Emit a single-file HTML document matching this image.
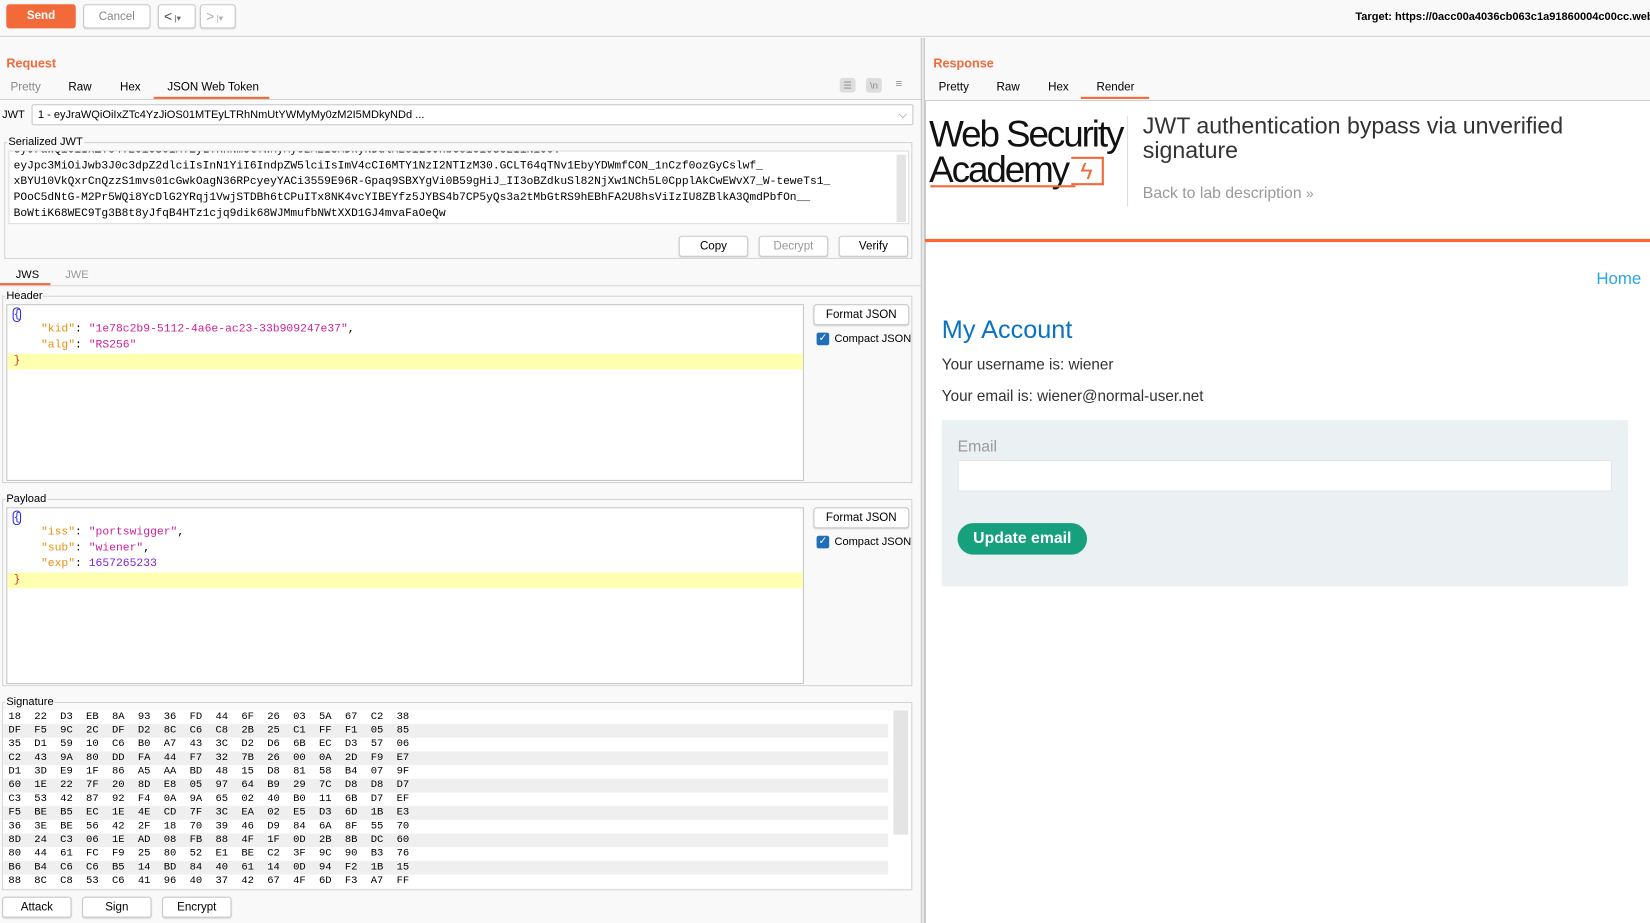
<!DOCTYPE html>
<html><head><meta charset="utf-8">
<style>
*{box-sizing:border-box;margin:0;padding:0}
html,body{width:1650px;height:923px;overflow:hidden;background:#fff}
#w{position:absolute;left:0;top:0;width:1568px;height:877px;transform:scale(1.05230,1.05245);transform-origin:0 0;font-family:"Liberation Sans",sans-serif;font-size:11px;color:#000;background:#f9f9f9}
.a{position:absolute}
.btn{position:absolute;border:1px solid #c8c8c8;border-radius:3px;background:#fff;text-align:center;font-size:11px;line-height:18px;color:#000;box-shadow:0 1px 1px #ddd}
.mono{font-family:"Liberation Mono",monospace}
.grp{position:absolute;border:1px solid #d4d4d4}
.lbl{position:absolute;top:-7px;left:2px;background:#f9f9f9;padding:0 1px;font-size:10.5px;line-height:13px}
.ed{position:absolute;background:#fff;border:1px solid #c6c6c6}
.ln{position:absolute;left:6px;font-size:10.8px;line-height:15px;white-space:pre}
.k{color:#e8900c}.s{color:#d0209a}.n{color:#7a1fe0}
.hl{position:absolute;left:0;right:0;height:15px;background:#ffffb0}
.chk{position:absolute;width:12px;height:12px;background:#1f6fb8;border-radius:2px;color:#fff;font-size:10px;line-height:12px;text-align:center}
.row{position:absolute;left:0;width:841px;height:13px;font-size:10px;line-height:13px}
.row span{display:inline-block;width:24.6px}
.sj div{white-space:pre}
</style></head><body><div id="w">
<div class="a" style="left:0;top:0;width:1568px;height:35px;background:#f9f9f9;border-bottom:1px solid #d0d0d0"></div>
<div class="a" style="left:6px;top:4px;width:66px;height:23px;background:#f26a3a;border-radius:3px;color:#fff;font-weight:bold;text-align:center;line-height:23px;font-size:11px">Send</div>
<div class="btn" style="left:79px;top:4px;width:64px;height:23px;line-height:22px;color:#888">Cancel</div>
<div class="btn" style="left:150px;top:4px;width:36px;height:23px;line-height:21px;font-size:13px;color:#444;text-align:left;padding-left:5px">&lt;<span style="font-size:8px;color:#666"> |▾</span></div>
<div class="btn" style="left:190px;top:4px;width:34px;height:23px;line-height:21px;font-size:13px;color:#aaa;text-align:left;padding-left:5px">&gt;<span style="font-size:8px"> |▾</span></div>
<div class="a" style="left:1288px;top:10px;font-weight:bold;font-size:10.5px;white-space:nowrap">Target: https://0acc00a4036cb063c1a91860004c00cc.web-s</div>
<div class="a" style="left:875px;top:36px;width:4px;height:841px;background:#e6e6e6;border-left:1px solid #c8c8c8;border-right:1px solid #c8c8c8"></div>
<div class="a" style="left:6px;top:53px;color:#f26a3a;font-weight:bold;font-size:12px">Request</div>
<div class="a" style="left:10px;top:77px;color:#888">Pretty</div>
<div class="a" style="left:65px;top:77px">Raw</div>
<div class="a" style="left:114px;top:77px">Hex</div>
<div class="a" style="left:159px;top:77px">JSON Web Token</div>
<div class="a" style="left:0;top:94px;width:875px;height:1px;background:#d0d0d0"></div>
<div class="a" style="left:146px;top:92px;width:110px;height:2px;background:#f26a3a"></div>
<div class="a" style="left:798px;top:74px;width:15px;height:14px;background:#ddd;border-radius:3px;color:#888;font-size:9px;text-align:center;line-height:14px">☰</div>
<div class="a" style="left:823px;top:74px;width:15px;height:14px;background:#ddd;border-radius:3px;color:#888;font-size:9px;text-align:center;line-height:14px">\n</div>
<div class="a" style="left:851px;top:74px;color:#888;font-size:11px">≡</div>
<div class="a" style="left:2px;top:103px;font-size:10.5px">JWT</div>
<div class="a" style="left:30px;top:99px;width:838px;height:20px;background:#fff;border:1px solid #c6c6c6;border-radius:2px;font-size:10.5px;line-height:18px;padding-left:5px">1 - eyJraWQiOiIxZTc4YzJiOS01MTEyLTRhNmUtYWMyMy0zM2I5MDkyNDd ...<span style="position:absolute;right:5px;color:#666">⌵</span></div>
<div class="grp" style="left:4px;top:135px;width:863px;height:111px"><div class="lbl">Serialized JWT</div></div>
<div class="ed mono sj" style="left:8px;top:143px;width:856px;height:70px;overflow:hidden;font-size:10.7px;line-height:15px;padding-left:4px;border-color:#ddd"><div style="margin-top:-8px">eyJraWQiOiIxZTc4YzJiOS01MTEyLTRhNmUtYWMyMy0zM2I5MDkyNDdlMzciLCJhbGciOiJSUzI1NiJ9.</div><div>eyJpc3MiOiJwb3J0c3dpZ2dlciIsInN1YiI6IndpZW5lciIsImV4cCI6MTY1NzI2NTIzM30.GCLT64qTNv1EbyYDWmfCON_1nCzf0ozGyCslwf_</div><div>xBYU10VkQxrCnQzzS1mvs01cGwkOagN36RPcyeyYACi3559E96R-Gpaq9SBXYgVi0B59gHiJ_II3oBZdkuSl82NjXw1NCh5L0CpplAkCwEWvX7_W-teweTs1_</div><div>POoC5dNtG-M2Pr5WQi8YcDlG2YRqj1VwjSTDBh6tCPuITx8NK4vcYIBEYfz5JYBS4b7CP5yQs3a2tMbGtRS9hEBhFA2U8hsViIzIU8ZBlkA3QmdPbfOn__</div><div>BoWtiK68WEC9Tg3B8t8yJfqB4HTz1cjq9dik68WJMmufbNWtXXD1GJ4mvaFaOeQw</div><div style="position:absolute;right:2px;top:3px;width:9px;height:64px;background:#e4e4e4"></div></div>
<div class="btn" style="left:645px;top:224px;width:66px;height:20px">Copy</div>
<div class="btn" style="left:721px;top:224px;width:66px;height:20px;color:#999">Decrypt</div>
<div class="btn" style="left:797px;top:224px;width:66px;height:20px">Verify</div>
<div class="a" style="left:15px;top:255px;font-size:10.5px">JWS</div>
<div class="a" style="left:62px;top:255px;font-size:10.5px;color:#999">JWE</div>
<div class="a" style="left:0;top:271px;width:875px;height:1px;background:#d8d8d8"></div>
<div class="a" style="left:0;top:269px;width:48px;height:2px;background:#f26a3a"></div>
<div class="grp" style="left:2px;top:281px;width:865px;height:178px"><div class="lbl">Header</div></div>
<div class="ed mono" style="left:6px;top:289px;width:758px;height:168px">
<div class="hl" style="top:46px"></div>
<div class="ln" style="top:2px"><span style="color:#2a2adf;outline:1px solid #2a2adf;border-radius:3px">{</span></div>
<div class="ln" style="top:16px">    <span class="k">"kid"</span>: <span class="s">"1e78c2b9-5112-4a6e-ac23-33b909247e37"</span>,</div>
<div class="ln" style="top:31px">    <span class="k">"alg"</span>: <span class="s">"RS256"</span></div>
<div class="ln" style="top:46px;color:#e03030">}</div>
</div>
<div class="btn" style="left:773px;top:289px;width:91px;height:20px">Format JSON</div>
<div class="chk" style="left:776px;top:316px">✓</div>
<div class="a" style="left:793px;top:316px;font-size:10.5px">Compact JSON</div>
<div class="grp" style="left:2px;top:474px;width:865px;height:178px"><div class="lbl">Payload</div></div>
<div class="ed mono" style="left:6px;top:482px;width:758px;height:168px">
<div class="hl" style="top:61px"></div>
<div class="ln" style="top:2px"><span style="color:#2a2adf;outline:1px solid #2a2adf;border-radius:3px">{</span></div>
<div class="ln" style="top:16px">    <span class="k">"iss"</span>: <span class="s">"portswigger"</span>,</div>
<div class="ln" style="top:31px">    <span class="k">"sub"</span>: <span class="s">"wiener"</span>,</div>
<div class="ln" style="top:46px">    <span class="k">"exp"</span>: <span class="n">1657265233</span></div>
<div class="ln" style="top:61px;color:#e03030">}</div>
</div>
<div class="btn" style="left:773px;top:482px;width:91px;height:20px">Format JSON</div>
<div class="chk" style="left:776px;top:509px">✓</div>
<div class="a" style="left:793px;top:509px;font-size:10.5px">Compact JSON</div>
<div class="grp" style="left:2px;top:667px;width:865px;height:179px"><div class="lbl">Signature</div></div>
<div class="a mono" style="left:3px;top:675px;width:862px;height:169px;background:#fff;overflow:hidden">
<div class="row" style="top:0;background:#fff;padding-left:5px"><span>18</span><span>22</span><span>D3</span><span>EB</span><span>8A</span><span>93</span><span>36</span><span>FD</span><span>44</span><span>6F</span><span>26</span><span>03</span><span>5A</span><span>67</span><span>C2</span><span>38</span></div>
<div class="row" style="top:13px;background:#efefef;padding-left:5px"><span>DF</span><span>F5</span><span>9C</span><span>2C</span><span>DF</span><span>D2</span><span>8C</span><span>C6</span><span>C8</span><span>2B</span><span>25</span><span>C1</span><span>FF</span><span>F1</span><span>05</span><span>85</span></div>
<div class="row" style="top:26px;background:#fff;padding-left:5px"><span>35</span><span>D1</span><span>59</span><span>10</span><span>C6</span><span>B0</span><span>A7</span><span>43</span><span>3C</span><span>D2</span><span>D6</span><span>6B</span><span>EC</span><span>D3</span><span>57</span><span>06</span></div>
<div class="row" style="top:39px;background:#efefef;padding-left:5px"><span>C2</span><span>43</span><span>9A</span><span>80</span><span>DD</span><span>FA</span><span>44</span><span>F7</span><span>32</span><span>7B</span><span>26</span><span>00</span><span>0A</span><span>2D</span><span>F9</span><span>E7</span></div>
<div class="row" style="top:52px;background:#fff;padding-left:5px"><span>D1</span><span>3D</span><span>E9</span><span>1F</span><span>86</span><span>A5</span><span>AA</span><span>BD</span><span>48</span><span>15</span><span>D8</span><span>81</span><span>58</span><span>B4</span><span>07</span><span>9F</span></div>
<div class="row" style="top:65px;background:#efefef;padding-left:5px"><span>60</span><span>1E</span><span>22</span><span>7F</span><span>20</span><span>8D</span><span>E8</span><span>05</span><span>97</span><span>64</span><span>B9</span><span>29</span><span>7C</span><span>D8</span><span>D8</span><span>D7</span></div>
<div class="row" style="top:78px;background:#fff;padding-left:5px"><span>C3</span><span>53</span><span>42</span><span>87</span><span>92</span><span>F4</span><span>0A</span><span>9A</span><span>65</span><span>02</span><span>40</span><span>B0</span><span>11</span><span>6B</span><span>D7</span><span>EF</span></div>
<div class="row" style="top:91px;background:#efefef;padding-left:5px"><span>F5</span><span>BE</span><span>B5</span><span>EC</span><span>1E</span><span>4E</span><span>CD</span><span>7F</span><span>3C</span><span>EA</span><span>02</span><span>E5</span><span>D3</span><span>6D</span><span>1B</span><span>E3</span></div>
<div class="row" style="top:104px;background:#fff;padding-left:5px"><span>36</span><span>3E</span><span>BE</span><span>56</span><span>42</span><span>2F</span><span>18</span><span>70</span><span>39</span><span>46</span><span>D9</span><span>84</span><span>6A</span><span>8F</span><span>55</span><span>70</span></div>
<div class="row" style="top:117px;background:#efefef;padding-left:5px"><span>8D</span><span>24</span><span>C3</span><span>06</span><span>1E</span><span>AD</span><span>08</span><span>FB</span><span>88</span><span>4F</span><span>1F</span><span>0D</span><span>2B</span><span>8B</span><span>DC</span><span>60</span></div>
<div class="row" style="top:130px;background:#fff;padding-left:5px"><span>80</span><span>44</span><span>61</span><span>FC</span><span>F9</span><span>25</span><span>80</span><span>52</span><span>E1</span><span>BE</span><span>C2</span><span>3F</span><span>9C</span><span>90</span><span>B3</span><span>76</span></div>
<div class="row" style="top:143px;background:#efefef;padding-left:5px"><span>B6</span><span>B4</span><span>C6</span><span>C6</span><span>B5</span><span>14</span><span>BD</span><span>84</span><span>40</span><span>61</span><span>14</span><span>0D</span><span>94</span><span>F2</span><span>1B</span><span>15</span></div>
<div class="row" style="top:156px;background:#fff;padding-left:5px"><span>88</span><span>8C</span><span>C8</span><span>53</span><span>C6</span><span>41</span><span>96</span><span>40</span><span>37</span><span>42</span><span>67</span><span>4F</span><span>6D</span><span>F3</span><span>A7</span><span>FF</span></div>
<div class="a" style="left:846px;top:0;width:14px;height:118px;background:#e4e4e4"></div>
</div>
<div class="btn" style="left:2px;top:852px;width:66px;height:20px">Attack</div>
<div class="btn" style="left:78px;top:852px;width:66px;height:20px">Sign</div>
<div class="btn" style="left:154px;top:852px;width:66px;height:20px">Encrypt</div>
<div class="a" style="left:887px;top:53px;color:#f26a3a;font-weight:bold;font-size:12px">Response</div>
<div class="a" style="left:892px;top:77px">Pretty</div>
<div class="a" style="left:947px;top:77px">Raw</div>
<div class="a" style="left:996px;top:77px">Hex</div>
<div class="a" style="left:1042px;top:77px">Render</div>
<div class="a" style="left:1027px;top:92px;width:65px;height:2px;background:#f26a3a"></div>
<div class="a" style="left:879px;top:95px;width:689px;height:782px;background:#fff;border-top:1px solid #d0d0d0;border-left:1px solid #ccc"></div>
<div class="a" style="left:883px;top:111px;font-size:35px;line-height:34px;letter-spacing:-2px;color:#111;font-family:'Liberation Sans',sans-serif">Web Security<br>Academy</div>
<div class="a" style="left:1018px;top:149px;width:31px;height:27px;border:2px solid #f26a3a;border-left:none;color:#f26a3a;font-size:22px;line-height:24px;text-align:center">ϟ</div>
<div class="a" style="left:884px;top:176px;width:138px;height:2px;background:#f26a3a"></div>
<div class="a" style="left:1071px;top:110px;width:1px;height:86px;background:#ddd"></div>
<div class="a" style="left:1086px;top:108px;font-size:22px;line-height:23px;color:#333;width:460px">JWT authentication bypass via unverified signature</div>
<div class="a" style="left:1086px;top:175px;font-size:15px;color:#999">Back to lab description <span style="font-size:13px">»</span></div>
<div class="a" style="left:879px;top:227px;width:689px;height:3px;background:#ff6633"></div>
<div class="a" style="left:1517px;top:257px;font-size:16px;color:#29a8e0">Home</div>
<div class="a" style="left:895px;top:300px;font-size:24px;color:#0b72c0">My Account</div>
<div class="a" style="left:895px;top:339px;font-size:14.5px;color:#333">Your username is: wiener</div>
<div class="a" style="left:895px;top:369px;font-size:14.5px;color:#333">Your email is: wiener@normal-user.net</div>
<div class="a" style="left:895px;top:399px;width:652px;height:158px;background:#ebf0f2"></div>
<div class="a" style="left:910px;top:416px;font-size:15px;color:#999">Email</div>
<div class="a" style="left:910px;top:437px;width:622px;height:30px;background:#fff;border:1px solid #e2e6e8"></div>
<div class="a" style="left:910px;top:497px;width:123px;height:30px;background:#17a07d;border-radius:15px;color:#fff;font-weight:bold;font-size:15px;line-height:30px;text-align:center">Update email</div>
</div></body></html>
